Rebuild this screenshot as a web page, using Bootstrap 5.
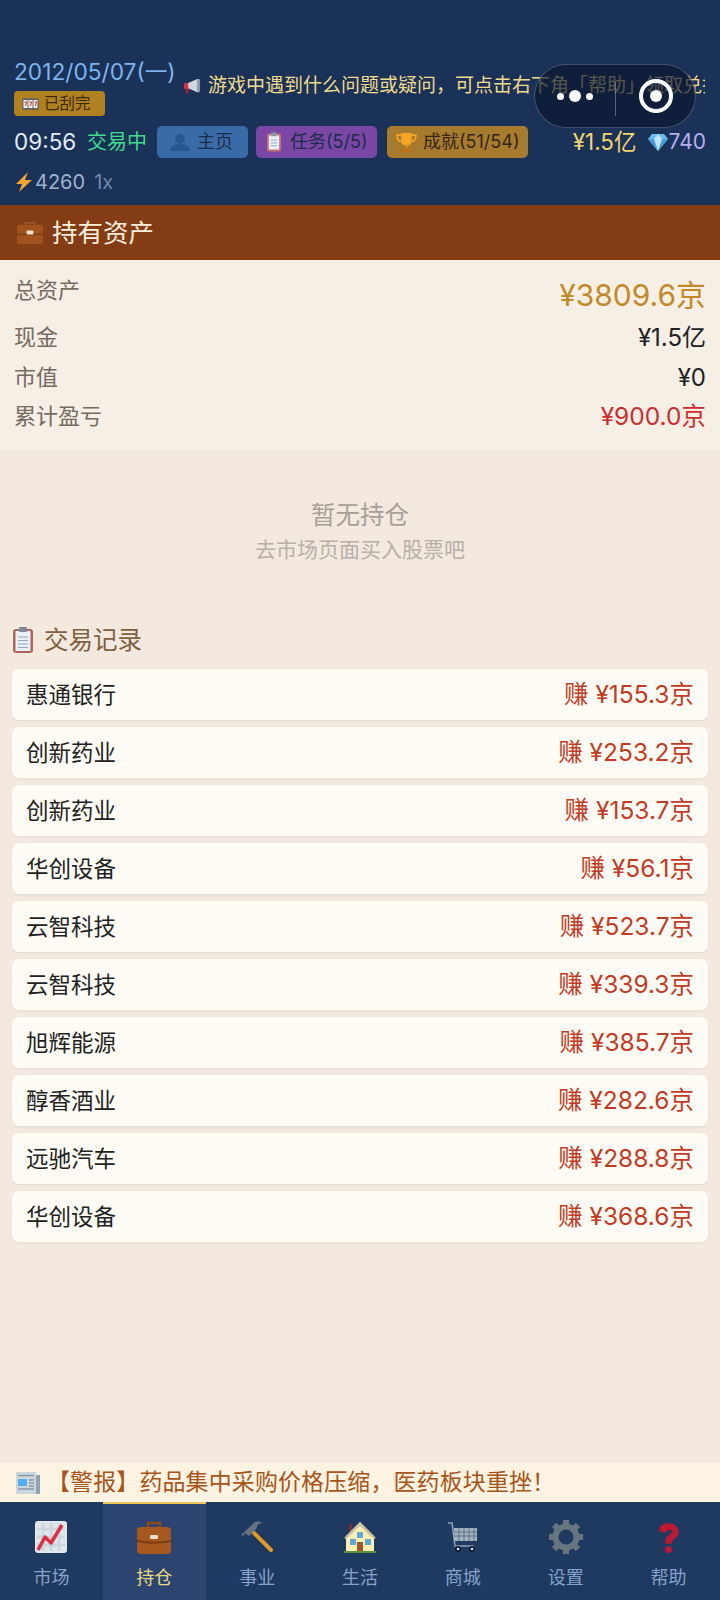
<!DOCTYPE html>
<html lang="zh"><head><meta charset="utf-8">
<link href="https://cdn.jsdelivr.net/npm/bootstrap@5.3.0/dist/css/bootstrap.min.css" rel="stylesheet">
<style>
html,body{height:100%}
body{width:720px;height:1600px;overflow:hidden;background:#f3e9df;font-family:Inter,"Noto Sans CJK SC","Noto Sans",sans-serif;color:#222;position:relative}
.game-shell{height:1600px}
.top-head{background:#1a3158;height:205px;padding:58px 14px 0 14px;flex:none}
.date-col{width:168px;flex:none}
.date-txt{color:#7db4ec;font-size:22.700px;line-height:28px;white-space:nowrap}
.scratch{background:#b0811f;color:#3a2a10;font-size:15.500px;line-height:25px;height:25px;width:91px;border-radius:4px;padding-left:8px;margin-top:5px;gap:5px}
.ticker{color:#f1dc8b;font-size:19px;line-height:26px;white-space:nowrap;overflow:hidden;margin-left:1px;margin-top:15px;width:522px;height:26px}
.ticker svg{vertical-align:-3px;margin-right:6px}
.row-two{height:32px;margin-top:10px}
.clock{color:#e3ecf8;font-size:22.500px;line-height:32px;width:73px}
.trading{color:#3fdc8a;font-size:20px;line-height:32px;width:70px;white-space:nowrap}
.chip{height:32px;border-radius:5px;font-size:18px;line-height:32px;color:#1c2c48;white-space:nowrap}
.chip-a{background:#386ba8;width:91px;padding-left:13px;gap:7px}
.chip-b{background:#7a47a6;width:121px;margin-left:8px;padding-left:10px;gap:8px}
.chip-c{background:#a67b2e;width:141px;margin-left:10px;padding-left:9px;color:#33261a;gap:6px}
.cash-top{color:#f2d66c;font-size:22.500px;line-height:32px;margin-left:auto;white-space:nowrap}
.gem-top{color:#b3aff0;font-size:21px;line-height:32px;margin-left:11px;gap:1px}
.row-three{margin-top:10px;height:28px;color:#9fb4cf;font-size:20px;line-height:28px}
.row-three svg{margin:0 1px 0 1px}
.speed-txt{color:#6f8aa8;margin-left:9px}
.pill-cap{position:absolute;left:534px;top:64px;width:162px;height:64px;border-radius:32px;background:rgba(11,22,46,.68);border:1.500px solid rgba(150,160,180,.4)}
.pill-sep{position:absolute;left:80px;top:17px;width:1px;height:34px;background:rgba(200,205,215,.4)}
.pill-dots{position:absolute;left:22px;top:25px;gap:5px}
.pill-dots i{display:block;background:#fff;border-radius:50%}
.dot-s{width:7px;height:7px}
.dot-b{width:12px;height:12px}
.pill-rec{position:absolute;left:104px;top:14px;width:34px;height:34px;border:4px solid #fff;border-radius:50%}
.pill-rec::after{content:"";position:absolute;left:7px;top:7px;width:12px;height:12px;background:#fff;border-radius:50%}
.asset-title{background:#843c14;height:55px;color:#fbeedd;font-size:25.500px;line-height:55px;padding-left:17px;gap:9px;flex:none}
.asset-box{background:#f6efe6;height:190px;padding:11px 14px 0;flex:none}
.asset-row{height:39.500px;font-size:22px;line-height:39px;color:#756b60}
.asset-row.total{height:47px;line-height:38px}
.asset-row b{font-weight:400;color:#222;font-size:24px}
.asset-row.total b{color:#c18a26;font-size:30px;line-height:44px;margin-top:2px}
.asset-row b.loss{color:#cc2d2d;font-size:24.500px}
.empty-box{height:182px;padding-top:48px;text-align:center;flex:none}
.empty-big{color:#a7a097;font-size:24.500px;line-height:34px}
.empty-sub{color:#b8b0a6;font-size:21px;line-height:36px}
.log-title{color:#80603f;font-size:24.500px;line-height:36px;padding-left:12px;gap:10px;height:36px;margin-top:-10px}
.log-list{padding:0 12px;margin-top:11px;gap:7px}
.log-item{background:#fffcf6;height:51px;border-radius:7px;padding:0 14px;font-size:22.500px;line-height:51px;box-shadow:0 1px 2px rgba(90,60,30,.08)}
.log-item b{font-weight:400;color:#c43a22;font-size:24.500px}
.spacer{flex:1}
.news-bar{background:#fcf3e2;height:39px;color:#a8551a;font-size:23px;line-height:39px;padding-left:16px;gap:7px;white-space:nowrap;letter-spacing:.1px;flex:none}
.tabs{background:#1f3a61;height:98px;flex:none}
.tab-item{flex:1;text-align:center;color:#87a2c9;font-size:18px;line-height:28px;padding-top:17px}
.tab-ico{height:36px;margin-bottom:9px}
.tab-item.on{background:#2c4570;color:#ecd97e;box-shadow:inset 0 2px 0 #ecc95a}
</style></head><body>
<div class="game-shell d-flex flex-column">
 <div class="top-head">
  <div class="d-flex">
   <div class="date-col">
    <div class="date-txt">2012/05/07(一)</div>
    <div class="scratch d-flex align-items-center">
     <svg width="17" height="12" viewBox="0 0 17 12"><rect width="17" height="12" rx="2" fill="#6b6560"/><rect x="1.500" y="2" width="4" height="8" fill="#f1efe9"/><rect x="6.500" y="2" width="4" height="8" fill="#f1efe9"/><rect x="11.500" y="2" width="4" height="8" fill="#f1efe9"/><path d="M2.500 4h2l-1 4M7.500 4h2l-1 4M12.500 4h2l-1 4" stroke="#b33" fill="none"/></svg>已刮完</div>
   </div>
   <div class="ticker"><svg width="19" height="17" viewBox="0 0 20 18"><path d="M2 6l4-1 9-4 2 0v14h-2l-9-4-4-1z" fill="#ccd6dd"/><path d="M1 5.500l4.500-.5v7L1 11.500z" fill="#dd2e44"/><path d="M3 11l3 .6-.8 5.400H3.500z" fill="#be1931"/><rect x="15" y="1" width="3" height="14" rx="1.500" fill="#8899a6"/></svg>游戏中遇到什么问题或疑问，可点击右下角「帮助」领取兑换码</div>
  </div>
  <div class="row-two d-flex">
   <div class="clock">09:56</div><div class="trading">交易中</div>
   <div class="chip chip-a d-flex align-items-center"><svg width="20" height="20" viewBox="0 0 20 20"><circle cx="10" cy="7" r="5" fill="#25588f"/><path d="M0 19c0-5 5-7 10-7s10 2 10 7z" fill="#25588f"/></svg>主页</div>
   <div class="chip chip-b d-flex align-items-center"><svg width="16" height="22" viewBox="0 0 17 22"><rect x="1" y="2" width="15" height="19" rx="2" fill="#c0706a"/><rect x="3" y="4" width="11" height="15" fill="#e8f0f6"/><rect x="5.500" y="1" width="6" height="4" rx="1" fill="#8899a6"/><path d="M5 9h7M5 12h7M5 15h7" stroke="#8fa8c0"/></svg>任务(5/5)</div>
   <div class="chip chip-c d-flex align-items-center"><svg width="21" height="21" viewBox="0 0 20 20"><path d="M5 1h10v7c0 3-2 5-5 5s-5-2-5-5z" fill="#f5a623"/><path d="M5 3H1c0 4 2 6 4 6M15 3h4c0 4-2 6-4 6" fill="none" stroke="#f5a623" stroke-width="1.600"/><rect x="9" y="12" width="2" height="4" fill="#e08a10"/><rect x="5" y="16" width="10" height="3" fill="#c0711a"/></svg>成就(51/54)</div>
   <div class="cash-top">¥1.5亿</div>
   <div class="gem-top d-flex align-items-center"><svg width="20" height="18" viewBox="0 0 20 18"><path d="M4 1h12l4 5-10 12L0 6z" fill="#6cbcf0"/><path d="M0 6h20L10 18z" fill="#4a9ad8"/><path d="M6 6l4-5 4 5-4 12z" fill="#bde4fb"/></svg>740</div>
  </div>
  <div class="row-three d-flex">
   <svg class="align-self-center" width="19" height="20" viewBox="0 0 19 20"><path d="M13 0L1 12h6l-3 8 13-12h-7z" fill="#f3a52c"/></svg><span>4260</span><span class="speed-txt">1x</span>
  </div>
 </div>
 <div class="asset-title d-flex align-items-center"><svg width="26" height="25" viewBox="0 0 27 26"><path d="M9 5V3h9v2" fill="none" stroke="#9b5a2a" stroke-width="2"/><rect y="5" width="27" height="20" rx="3" fill="#a0531f"/><path d="M0 15h27" stroke="#7d3b10" stroke-width="1.500"/><rect x="10" y="11" width="7" height="4" rx="1" fill="#f3e3cf"/></svg>持有资产</div>
 <div class="asset-box">
  <div class="asset-row total d-flex justify-content-between"><span>总资产</span><b>¥3809.6京</b></div>
  <div class="asset-row d-flex justify-content-between"><span>现金</span><b>¥1.5亿</b></div>
  <div class="asset-row d-flex justify-content-between"><span>市值</span><b>¥0</b></div>
  <div class="asset-row d-flex justify-content-between"><span>累计盈亏</span><b class="loss">¥900.0京</b></div>
 </div>
 <div class="empty-box"><div class="empty-big">暂无持仓</div><div class="empty-sub">去市场页面买入股票吧</div></div>
 <div class="log-title d-flex align-items-center"><svg width="22" height="26" viewBox="0 0 22 26"><rect x="1" y="2" width="20" height="24" rx="3" fill="#b0655a"/><rect x="3.500" y="4" width="15" height="20" fill="#e8f0f6"/><rect x="7" y="0" width="8" height="5" rx="1" fill="#7a8a98"/><path d="M6 10h10M6 13.500h10M6 17h10M6 20.500h10" stroke="#8fa8c0" stroke-width="1.200"/></svg>交易记录</div>
 <div class="log-list d-flex flex-column">
  <div class="log-item d-flex justify-content-between"><span>惠通银行</span><b>赚 ¥155.3京</b></div>
  <div class="log-item d-flex justify-content-between"><span>创新药业</span><b>赚 ¥253.2京</b></div>
  <div class="log-item d-flex justify-content-between"><span>创新药业</span><b>赚 ¥153.7京</b></div>
  <div class="log-item d-flex justify-content-between"><span>华创设备</span><b>赚 ¥56.1京</b></div>
  <div class="log-item d-flex justify-content-between"><span>云智科技</span><b>赚 ¥523.7京</b></div>
  <div class="log-item d-flex justify-content-between"><span>云智科技</span><b>赚 ¥339.3京</b></div>
  <div class="log-item d-flex justify-content-between"><span>旭辉能源</span><b>赚 ¥385.7京</b></div>
  <div class="log-item d-flex justify-content-between"><span>醇香酒业</span><b>赚 ¥282.6京</b></div>
  <div class="log-item d-flex justify-content-between"><span>远驰汽车</span><b>赚 ¥288.8京</b></div>
  <div class="log-item d-flex justify-content-between"><span>华创设备</span><b>赚 ¥368.6京</b></div>
 </div>
 <div class="spacer"></div>
 <div class="news-bar d-flex align-items-center"><svg width="24" height="24" viewBox="0 0 24 24"><rect x="19" y="4" width="5" height="19" fill="#8fa5b5"/><rect y="1" width="20" height="22" fill="#ccd6dd"/><rect x="2" y="8" width="9" height="7" fill="#55acee"/><path d="M2 4.500h16M13 9h5M13 12h5M13 15h5M2 18h16" stroke="#8899a6" stroke-width="1.300"/></svg>【警报】药品集中采购价格压缩，医药板块重挫！</div>
 <div class="tabs d-flex">
  <div class="tab-item"><div class="tab-ico d-flex align-items-center justify-content-center"><svg width="32" height="32" viewBox="0 0 32 32"><rect width="32" height="32" rx="3" fill="#e1e8ed"/><path d="M2 8h28M2 16h28M2 24h28M8 2v28M16 2v28M24 2v28" stroke="#ccd6dd" stroke-width="3"/><path d="M3 29l7-13 6 6 11-18" fill="none" stroke="#dd2e44" stroke-width="3.500" stroke-linejoin="round"/></svg></div>市场</div>
  <div class="tab-item on"><div class="tab-ico d-flex align-items-center justify-content-center"><svg width="34" height="34" viewBox="0 0 34 34"><path d="M11 7V3h12v4" fill="none" stroke="#8a4a1c" stroke-width="2.500"/><rect y="7" width="34" height="27" rx="4" fill="#a7581f"/><path d="M0 21c10 2 24 2 34 0" stroke="#7d3b10" stroke-width="2" fill="none"/><rect x="13" y="15" width="8" height="4" rx="1" fill="#ecdfcf"/></svg></div>持仓</div>
  <div class="tab-item"><div class="tab-ico d-flex align-items-center justify-content-center"><svg width="32" height="32" viewBox="0 0 32 32"><path d="M11 10L30 29" stroke="#e19a22" stroke-width="4" stroke-linecap="round"/><path d="M0 14L14 1c3-1 6 0 8 1-4 0-6 2-6 4l-1 2-7 7-4-3-2 3z" fill="#66757f"/></svg></div>事业</div>
  <div class="tab-item"><div class="tab-ico d-flex align-items-center justify-content-center"><svg width="34" height="32" viewBox="0 0 34 32"><rect x="6" y="3" width="3" height="7" fill="#7a2e3a"/><path d="M17 1L31 15v15H3V15z" fill="#fdeeb2"/><path d="M17 1L33 17l-2 1L17 5 3 18l-2-1z" fill="#c9bfa0"/><rect x="14" y="11" width="6" height="6" fill="#5fa7dc"/><rect x="7" y="18" width="6" height="6" fill="#5fa7dc"/><rect x="22" y="18" width="6" height="6" fill="#5fa7dc"/><rect x="14" y="21" width="6" height="9" fill="#a0562a"/><rect x="1" y="30" width="32" height="2" fill="#5c913b"/></svg></div>生活</div>
  <div class="tab-item"><div class="tab-ico d-flex align-items-center justify-content-center"><svg width="32" height="32" viewBox="0 0 32 32"><path d="M1 2h4l3 23h19" fill="none" stroke="#8fa3b5" stroke-width="1.500"/><rect x="7" y="7" width="23" height="13" fill="#a3b3c2"/><path d="M7 11h23M7 15h23M12 7v13M17 7v13M22 7v13M27 7v13" stroke="#5f7284"/><circle cx="11" cy="28" r="3" fill="#111c2e"/><circle cx="25" cy="28" r="3" fill="#111c2e"/><circle cx="11" cy="28" r="1.300" fill="#dde"/><circle cx="25" cy="28" r="1.300" fill="#dde"/></svg></div>商城</div>
  <div class="tab-item"><div class="tab-ico d-flex align-items-center justify-content-center"><svg width="34" height="34" viewBox="0 0 34 34"><circle cx="17" cy="17" r="10.500" fill="none" stroke="#66757f" stroke-width="6"/><path d="M14 0h6v6h-6zM14 28h6v6h-6zM0 14h6v6H0zM28 14h6v6h-6z" fill="#66757f"/><path d="M14 0h6v6h-6zM14 28h6v6h-6zM0 14h6v6H0zM28 14h6v6h-6z" fill="#66757f" transform="rotate(45 17 17)"/></svg></div>设置</div>
  <div class="tab-item"><div class="tab-ico d-flex align-items-center justify-content-center"><svg width="24" height="33" viewBox="0 0 24 33"><path d="M3 10C3 5 7 3 12 3s9 3 9 8c0 4-3 5-5 7-1.500 1-2 2-2 4H9c0-4 1-6 4-8 2-1 3-2 3-3 0-2-2-3-4-3s-3 1-4 3z" fill="#be1931" stroke="#be1931" stroke-width="1.500"/><circle cx="11.500" cy="28.500" r="3.500" fill="#be1931"/></svg></div>帮助</div>
 </div>
</div>
<div class="pill-cap"><div class="pill-dots d-flex align-items-center"><i class="dot-s"></i><i class="dot-b"></i><i class="dot-s"></i></div><div class="pill-sep"></div><div class="pill-rec"></div></div>
<script src="https://cdn.jsdelivr.net/npm/bootstrap@5.3.0/dist/js/bootstrap.bundle.min.js"></script>
</body></html>
